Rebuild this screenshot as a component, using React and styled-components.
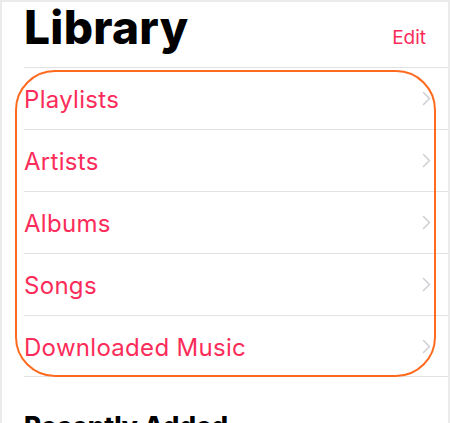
import React from 'react';
import styled, {createGlobalStyle} from "styled-components";

const items = ["Playlists", "Artists", "Albums", "Songs", "Downloaded Music"];

const Chevron = () => (
    <svg width="9" height="15" viewBox="0 0 9 15" fill="none">
        <path d="M1.5 1.5 L7.5 7.5 L1.5 13.5" stroke="#cfcfd3" strokeWidth="1.5" strokeLinecap="round" strokeLinejoin="round"/>
    </svg>
);

const App = () => {
    return (
        <>
            <GlobalStyle/>
            <Frame>
                <Header>
                    <Title>Library</Title>
                    <EditButton>Edit</EditButton>
                </Header>
                <List>
                    {items.map((item, i) => (
                        <Row key={i}>
                            <RowLabel>{item}</RowLabel>
                            <Chevron/>
                        </Row>
                    ))}
                </List>
                <SectionTitle>Recently Added</SectionTitle>
                <Highlight/>
            </Frame>
        </>
    )
};

const GlobalStyle = createGlobalStyle`
  body {
    margin: 0;
    background: #fff;
    font-family: "Inter", "Liberation Sans", sans-serif;
  }
`

const Frame = styled.div`
  position: relative;
  box-sizing: border-box;
  width: 450px;
  height: 423px;
  overflow: hidden;
  border-top: 2px solid #ebebeb;
  border-left: 2px solid #ebebeb;
  border-right: 2px solid #ebebeb;
  background: #fff;
`

const Header = styled.div`
  display: flex;
  justify-content: space-between;
  align-items: baseline;
  height: 65px;
  padding: 0 22px 0 22px;
  box-sizing: border-box;
`

const Title = styled.h1`
  margin: 0;
  font-size: 46px;
  font-weight: 800;
  line-height: 50px;
  letter-spacing: 0.3px;
  color: #000;
`

const EditButton = styled.span`
  font-size: 19px;
  color: #fb2c5a;
`

const List = styled.div`
  margin-left: 22px;
  display: flex;
  flex-direction: column;
`

const Row = styled.div`
  height: 62px;
  box-sizing: border-box;
  border-top: 1px solid #e2e2e4;
  display: flex;
  align-items: center;
  justify-content: space-between;
  padding-right: 17px;

  &:last-child {
    border-bottom: 1px solid #e2e2e4;
  }
`

const RowLabel = styled.span`
  font-size: 24px;
  letter-spacing: 0.3px;
  color: #fb2c5a;
  padding-top: 2px;
`

const SectionTitle = styled.h2`
  margin: 33px 0 0 22px;
  font-size: 26px;
  font-weight: 800;
  color: #000;
`

const Highlight = styled.div`
  position: absolute;
  left: 13px;
  top: 68px;
  width: 421px;
  height: 307px;
  box-sizing: border-box;
  border: 2.5px solid #ff6a1f;
  border-radius: 40px;
  pointer-events: none;
`

export default App;
